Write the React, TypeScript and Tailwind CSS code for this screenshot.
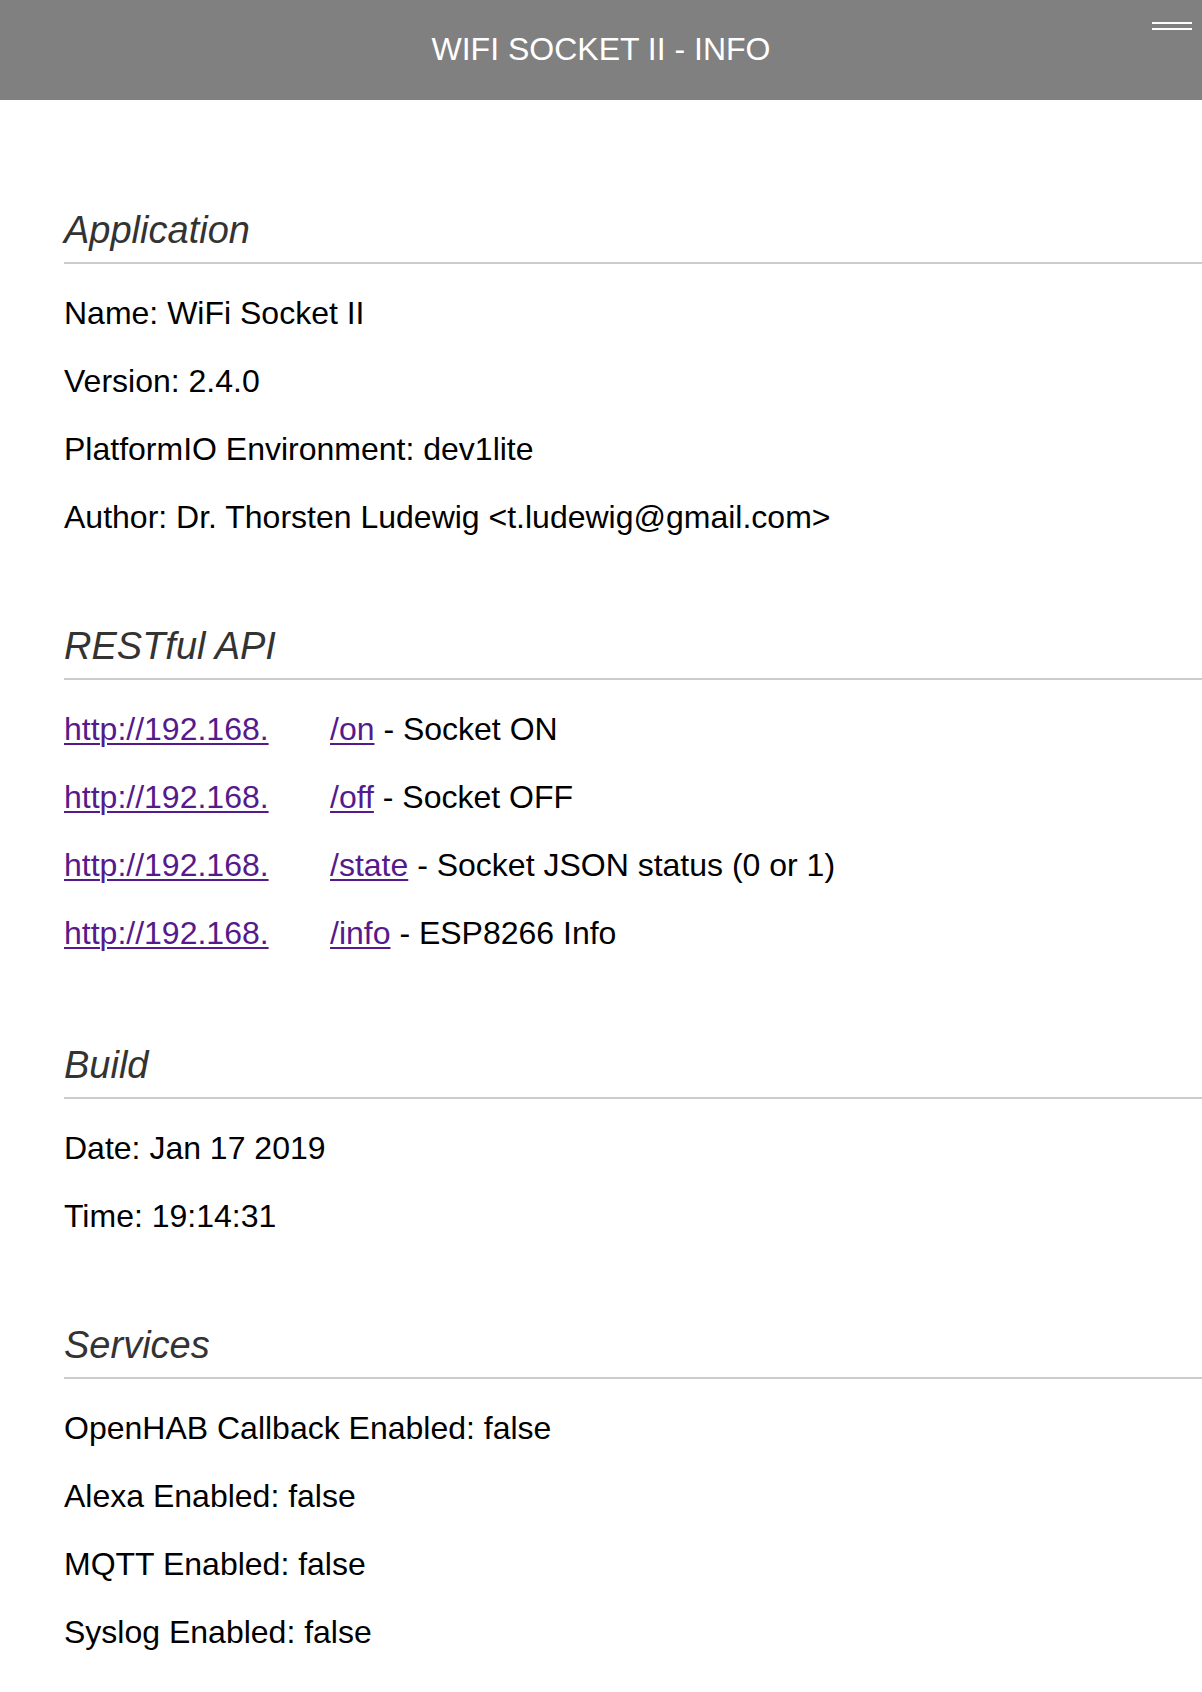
const sections = [
  {
    title: "Application",
    gapTop: "mt-[108px]",
    rows: [
      "Name: WiFi Socket II",
      "Version: 2.4.0",
      "PlatformIO Environment: dev1lite",
      "Author: Dr. Thorsten Ludewig <t.ludewig@gmail.com>",
    ],
  },
];

const apiRows = [
  { path: "/on", label: "Socket ON" },
  { path: "/off", label: "Socket OFF" },
  { path: "/state", label: "Socket JSON status (0 or 1)" },
  { path: "/info", label: "ESP8266 Info" },
];

function SectionHeading({ children }: { children: React.ReactNode }) {
  return (
    <div className="border-b-[2px] border-[#cccccc] pb-[10px] mb-[15px]">
      <h2 className="text-[38px] leading-[44px] italic text-[#333333]">{children}</h2>
    </div>
  );
}

function Row({ children }: { children: React.ReactNode }) {
  return <p className="h-[68px] leading-[68px] text-[32px] text-black whitespace-nowrap">{children}</p>;
}

export default function App() {
  return (
    <div className="min-h-[1692px] bg-white font-['Liberation_Sans',Arial,sans-serif] overflow-hidden">
      <header className="relative h-[100px] bg-[#808080] flex items-center justify-center pb-[2px]">
        <h1 className="text-[32px] text-white">WIFI SOCKET II - INFO</h1>
        <button className="absolute right-[10px] top-[22px] flex flex-col gap-[4px]" aria-label="menu">
          <span className="block w-[40px] h-[2px] bg-white" />
          <span className="block w-[40px] h-[2px] bg-white" />
        </button>
      </header>

      <main className="pl-[64px]">
        {sections.map((s) => (
          <section key={s.title} className={s.gapTop}>
            <SectionHeading>{s.title}</SectionHeading>
            {s.rows.map((r) => (
              <Row key={r}>{r}</Row>
            ))}
          </section>
        ))}

        <section className="mt-[73px]">
          <SectionHeading>RESTful API</SectionHeading>
          {apiRows.map((r) => (
            <Row key={r.path}>
              <span className="inline-block w-[266px]">
                <a href="#" className="text-[#551A8B] underline decoration-[2px] underline-offset-[3px]">
                  http://192.168.
                </a>
              </span>
              <a href="#" className="text-[#551A8B] underline decoration-[2px] underline-offset-[3px]">
                {r.path}
              </a>{" "}
              - {r.label}
            </Row>
          ))}
        </section>

        <section className="mt-[76px]">
          <SectionHeading>Build</SectionHeading>
          <Row>Date: Jan 17 2019</Row>
          <Row>Time: 19:14:31</Row>
        </section>

        <section className="mt-[73px]">
          <SectionHeading>Services</SectionHeading>
          <Row>OpenHAB Callback Enabled: false</Row>
          <Row>Alexa Enabled: false</Row>
          <Row>MQTT Enabled: false</Row>
          <Row>Syslog Enabled: false</Row>
        </section>
      </main>
    </div>
  );
}
